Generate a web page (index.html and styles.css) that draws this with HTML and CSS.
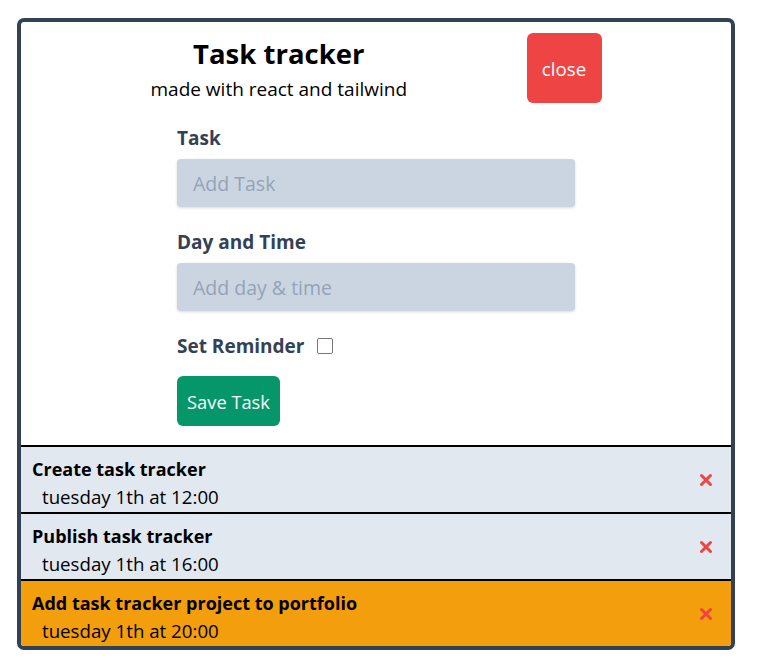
FILE: index.html
```html
<!DOCTYPE html>
<html>
<head>
<meta charset="utf-8">
<link rel="stylesheet" href="styles.css">
</head>
<body>
<div class="card">
  <header class="header">
    <div class="titles">
      <h1 class="title">Task tracker</h1>
      <p class="subtitle">made with react and tailwind</p>
    </div>
    <button class="btn-close">close</button>
  </header>
  <form class="form">
    <label class="label">Task</label>
    <input class="input" type="text" placeholder="Add Task">
    <label class="label label-2">Day and Time</label>
    <input class="input" type="text" placeholder="Add day &amp; time">
    <div class="reminder">
      <span class="label-inline">Set Reminder</span>
      <span class="checkbox"></span>
    </div>
    <button type="button" class="btn-save">Save Task</button>
  </form>
  <ul class="tasks">
    <li class="task">
      <div class="task-text">
        <div class="task-title">Create task tracker</div>
        <div class="task-date">tuesday 1th at 12:00</div>
      </div>
      <svg class="x" viewBox="0 0 14 14"><path d="M2.5 2.5 L11.5 11.5 M11.5 2.5 L2.5 11.5" stroke="#ef4444" stroke-width="3" stroke-linecap="round"/></svg>
    </li>
    <li class="task">
      <div class="task-text">
        <div class="task-title">Publish task tracker</div>
        <div class="task-date">tuesday 1th at 16:00</div>
      </div>
      <svg class="x" viewBox="0 0 14 14"><path d="M2.5 2.5 L11.5 11.5 M11.5 2.5 L2.5 11.5" stroke="#ef4444" stroke-width="3" stroke-linecap="round"/></svg>
    </li>
    <li class="task task-reminder">
      <div class="task-text">
        <div class="task-title">Add task tracker project to portfolio</div>
        <div class="task-date">tuesday 1th at 20:00</div>
      </div>
      <svg class="x" viewBox="0 0 14 14"><path d="M2.5 2.5 L11.5 11.5 M11.5 2.5 L2.5 11.5" stroke="#ef4444" stroke-width="3" stroke-linecap="round"/></svg>
    </li>
  </ul>
</div>
</body>
</html>
```
FILE: styles.css
```css
* { box-sizing: border-box; }
body {
  margin: 0;
  background: #fff;
  font-family: "Open Sans", "Noto Sans", sans-serif;
  color: #000;
}
.card {
  width: 718px;
  margin: 18px 0 0 17px;
  border: 4px solid #334155;
  border-radius: 7px;
  overflow: hidden;
  background: #fff;
}
.header {
  display: flex;
  justify-content: space-evenly;
  align-items: flex-start;
  padding: 11px 10px 0;
}
.titles { text-align: center; padding-top: 4px; }
.title {
  margin: 0;
  font-size: 27.5px;
  font-weight: 700;
  line-height: 34px;
}
.subtitle {
  margin: 0;
  font-size: 19px;
  line-height: 36px;
}
.btn-close {
  width: 75px;
  height: 70px;
  border: none;
  border-radius: 6px;
  background: #ef4444;
  color: #fff;
  font-family: inherit;
  font-size: 18.7px;
}
.form {
  width: 398px;
  margin: 19px auto 0;
  display: flex;
  flex-direction: column;
  align-items: flex-start;
}
.label, .label-inline {
  font-size: 19px;
  font-weight: 700;
  color: #334155;
  line-height: 24px;
}
.label { margin-bottom: 9px; }
.label-2 { margin-top: 23px; }
.input {
  width: 100%;
  height: 48px;
  border: none;
  border-radius: 4px;
  background: #cbd5e1;
  padding: 0 16px;
  font-family: inherit;
  font-size: 19.5px;
  box-shadow: 0 1px 3px rgba(0,0,0,0.15);
  outline: none;
}
.input::placeholder { color: #94a3b8; }
.reminder {
  display: flex;
  align-items: center;
  gap: 13px;
  margin-top: 23px;
  height: 24px;
}
.checkbox {
  width: 16px;
  height: 16px;
  border: 1.5px solid #767688;
  border-radius: 2px;
  background: #fff;
}
.btn-save {
  margin-top: 18px;
  width: 103px;
  height: 50px;
  border: none;
  border-radius: 6px;
  background: #059669;
  color: #fff;
  font-family: inherit;
  font-size: 18.3px;
}
.tasks {
  list-style: none;
  margin: 19px 0 0;
  padding: 0;
}
.task {
  display: flex;
  justify-content: space-between;
  align-items: center;
  height: 67px;
  border-top: 2px solid #000;
  background: #e2e8f0;
  padding: 0 18px 0 11px;
}
.task-reminder { background: #f39e0c; }
.task-text { padding-top: 7px; }
.task-title {
  font-size: 18px;
  font-weight: 700;
  line-height: 28px;
}
.task-date {
  font-size: 18.7px;
  line-height: 28px;
  padding-left: 10px;
}
.x { width: 14px; height: 14px; display: block; }
```
